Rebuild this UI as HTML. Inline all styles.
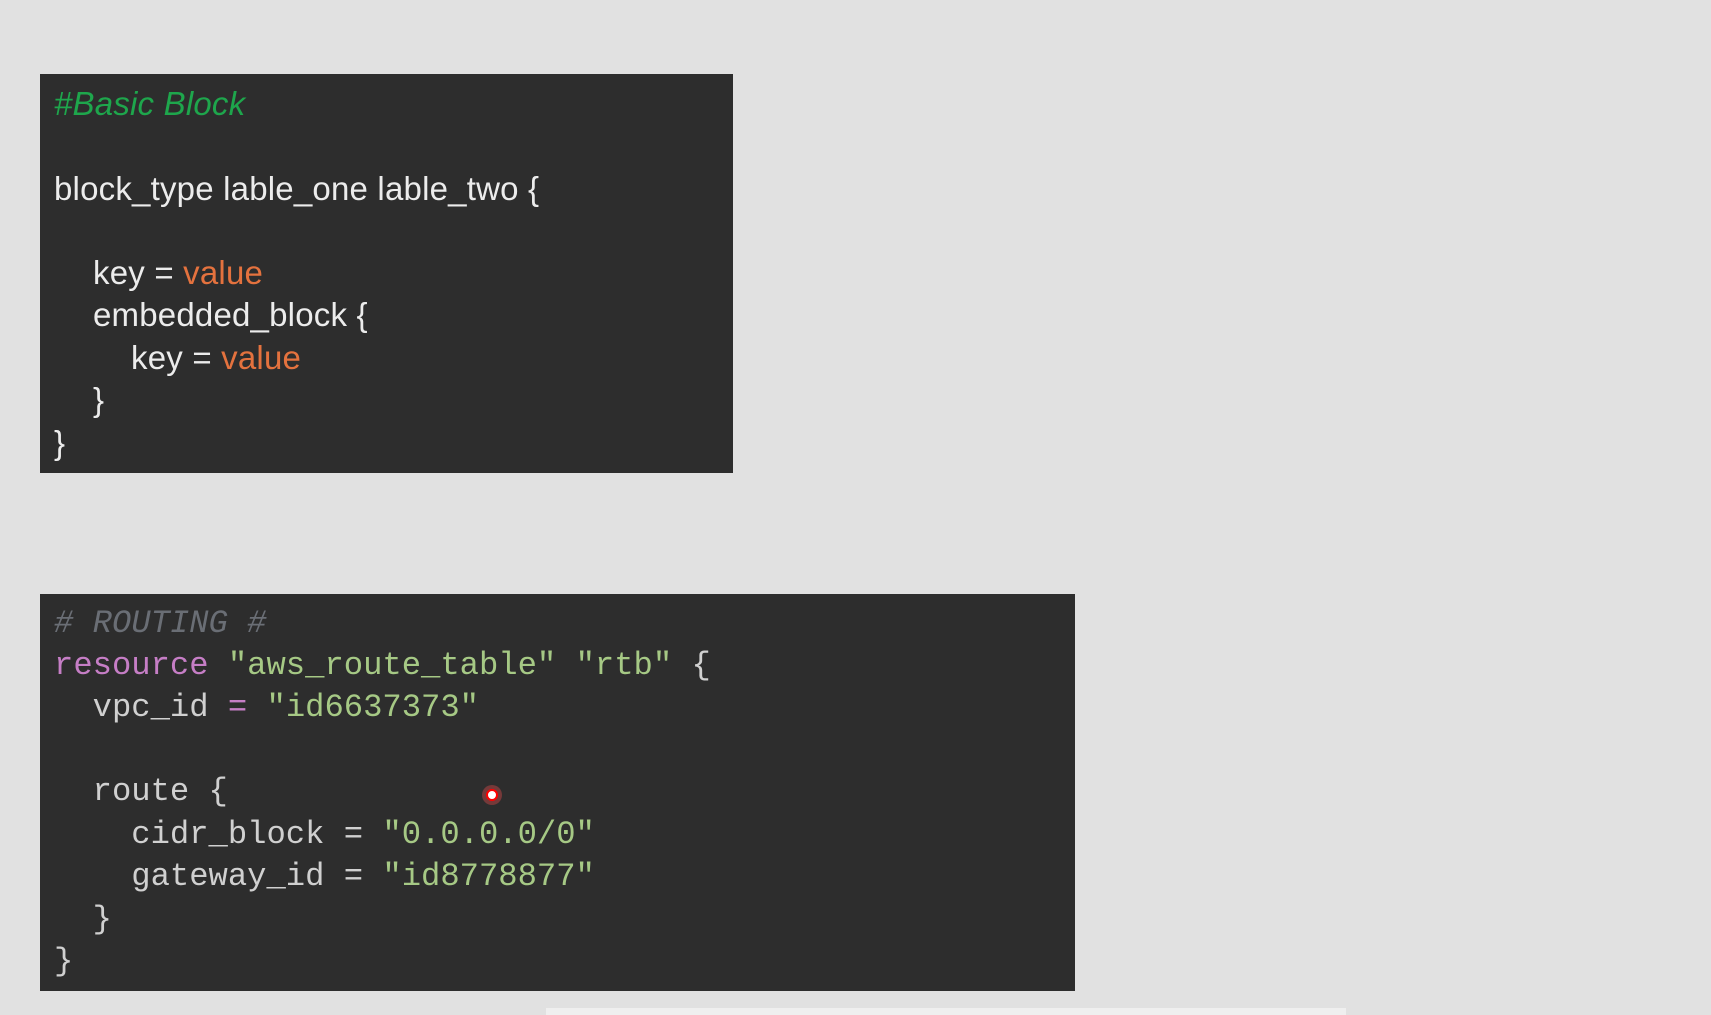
<!DOCTYPE html>
<html><head><meta charset="utf-8"><style>
html,body{margin:0;padding:0;width:1711px;height:1015px;background:#e1e1e1;overflow:hidden;position:relative}
.b{position:absolute;background:#2d2d2d}
.l{position:absolute;white-space:pre;line-height:42px}
.s{font-family:"Liberation Sans",sans-serif;font-size:33px;color:#ececec;letter-spacing:0.2px}
.m{font-family:"Liberation Mono",monospace;font-size:32.2px;color:#d0d0d0}
.o{color:#e4723e}.g{color:#a6c985}.p{color:#c67ec6}.c{color:#6a6e75;font-style:italic}
</style></head><body>
<div class="b" style="left:40px;top:74px;width:693px;height:399px"></div>
<div class="b" style="left:40px;top:594px;width:1035px;height:397px"></div>
<div style="position:absolute;left:546px;top:1008px;width:800px;height:7px;background:#efefef"></div>

<div class="l s" style="left:54px;top:83px;color:#1ea64c;font-style:italic">#Basic Block</div>
<div class="l s" style="left:54px;top:168px">block_type lable_one lable_two {</div>
<div class="l s" style="left:93px;top:252px">key = <span class="o">value</span></div>
<div class="l s" style="left:93px;top:294px">embedded_block {</div>
<div class="l s" style="left:131px;top:337px">key = <span class="o">value</span></div>
<div class="l s" style="left:93px;top:379px">}</div>
<div class="l s" style="left:54px;top:422px">}</div>

<div class="l m" style="left:54px;top:603px"><span class="c"># ROUTING #</span></div>
<div class="l m" style="left:54px;top:645px"><span class="p">resource</span> <span class="g">"aws_route_table"</span> <span class="g">"rtb"</span> {</div>
<div class="l m" style="left:54px;top:687px">  vpc_id <span class="p">=</span> <span class="g">"id6637373"</span></div>
<div class="l m" style="left:54px;top:771px">  route {</div>
<div class="l m" style="left:54px;top:814px">    cidr_block = <span class="g">"0.0.0.0/0"</span></div>
<div class="l m" style="left:54px;top:856px">    gateway_id = <span class="g">"id8778877"</span></div>
<div class="l m" style="left:54px;top:899px">  }</div>
<div class="l m" style="left:54px;top:941px">}</div>

<div style="position:absolute;left:482px;top:785px;width:20px;height:20px;border-radius:50%;background:rgba(255,80,80,0.35)"></div>
<div style="position:absolute;left:486px;top:789px;width:8px;height:8px;border-radius:50%;border:2px solid #f00;background:#fff"></div>
</body></html>
